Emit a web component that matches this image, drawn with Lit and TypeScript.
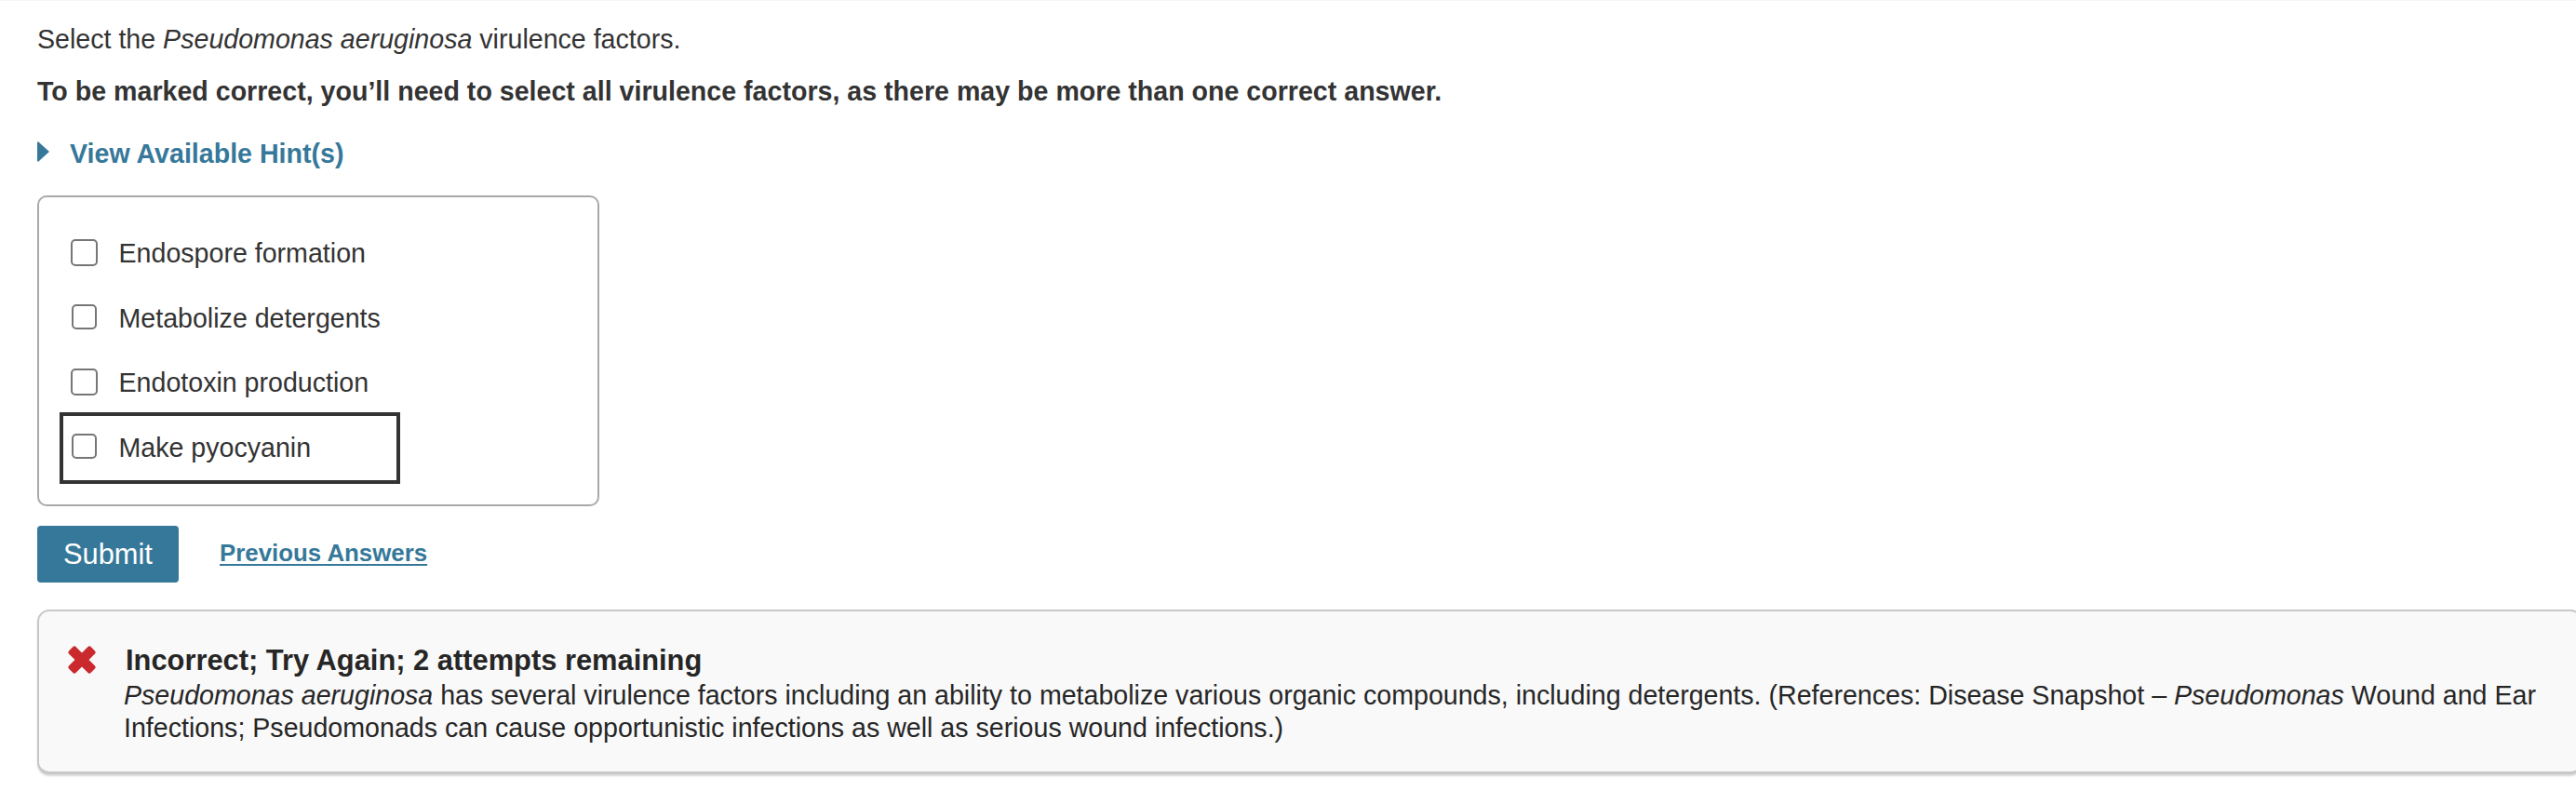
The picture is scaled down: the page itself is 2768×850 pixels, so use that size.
import { LitElement, html, css } from 'lit';
import { customElement, property } from 'lit/decorators.js';
import { classMap } from 'lit/directives/class-map.js';

@customElement('answer-list')
export class AnswerList extends LitElement {
    @property({ type: Array }) options: string[] = [];
    @property({ type: Number }) active = -1;

    static styles = css`
        :host {
            display: block;
            box-sizing: border-box;
            width: 604px;
            height: 334px;
            padding: 26px;
            border: 2px solid #a9a9a9;
            border-radius: 10px;
        }

        .option {
            display: flex;
            align-items: flex-start;
            box-sizing: border-box;
            width: 358px;
            height: 69.5px;
            padding: 16px 0 0 8px;
            line-height: 36px;
        }

        .active {
            outline: 4px solid #333;
        }

        .box {
            appearance: none;
            box-sizing: border-box;
            flex: none;
            width: 29px;
            height: 29px;
            margin: 3px 22.5px 0 0;
            border: 2px solid #767676;
            border-radius: 5px;
            background: #fff;
        }

        .option:nth-of-type(even) .box {
            width: 27px;
            height: 27px;
            margin: 3px 23.5px 0 1px;
        }
    `;

    render() {
        return html`
            ${this.options.map((text, i) => html`
                <label class=${classMap({ option: true, active: i === this.active })}>
                    <input class="box" type="checkbox">
                    <span>${text}</span>
                </label>
            `)}
        `;
    }
}

@customElement('answer-feedback')
export class AnswerFeedback extends LitElement {
    static styles = css`
        :host {
            display: flex;
            box-sizing: border-box;
            width: 2735px;
            height: 177px;
            padding: 35px 31px 0;
            border: 2px solid #c8c8c8;
            border-bottom-width: 3px;
            border-radius: 13px;
            background: #f9f9f9;
            box-shadow: 0 2px 2px rgba(0, 0, 0, 0.16);
            color: #262626;
            white-space: nowrap;
        }

        .cross {
            display: block;
            flex: none;
            width: 30px;
            height: 30px;
            margin: 2px 30px 0 0;
            fill: #ca2a2d;
        }

        .title {
            margin: 0 0 2px 2px;
            font-size: 30.85px;
            line-height: 36px;
            font-weight: bold;
        }

        .text {
            margin: 0;
            line-height: 35px;
        }
    `;

    render() {
        return html`
            <svg class="cross" viewBox="0 0 30 30">
                <g transform="rotate(45 15 15)">
                    <rect x="-1.7" y="9.7" width="33.4" height="10.6" rx="2.5"></rect>
                    <rect x="9.7" y="-1.7" width="10.6" height="33.4" rx="2.5"></rect>
                </g>
            </svg>
            <div>
                <h3 class="title">Incorrect; Try Again; 2 attempts remaining</h3>
                <p class="text"><em>Pseudomonas aeruginosa</em> has several virulence factors including an ability to metabolize various organic compounds, including detergents. (References: Disease Snapshot – <em>Pseudomonas</em> Wound and Ear<br>Infections; Pseudomonads can cause opportunistic infections as well as serious wound infections.)</p>
            </div>
        `;
    }
}

@customElement('app-root')
export class AppRoot extends LitElement {
    options = [
        'Endospore formation',
        'Metabolize detergents',
        'Endotoxin production',
        'Make pyocyanin',
    ];

    static styles = css`
        :host {
            display: block;
            box-sizing: border-box;
            height: 850px;
            padding: 23px 0 0 40px;
            overflow: hidden;
            border-top: 1px solid #f7f7f7;
            background: #fff;
            color: #333;
            font-family: "Liberation Sans", Helvetica, Arial, sans-serif;
            font-size: 28.6px;
            line-height: 36px;
        }

        .question {
            margin: 0 0 20px;
        }

        .note {
            margin: 0 0 31px;
            font-weight: bold;
        }

        .hint {
            display: flex;
            align-items: flex-start;
            gap: 22px;
            margin-bottom: 27px;
            color: #36789a;
            font-weight: bold;
        }

        .arrow {
            display: block;
            width: 13px;
            height: 22px;
            margin-top: 5px;
            fill: #36789a;
        }

        .actions {
            display: flex;
            gap: 44px;
            margin: 21px 0 29px;
        }

        .submit {
            width: 152px;
            height: 61px;
            padding: 0;
            border: 0;
            border-radius: 4px;
            background: #36789a;
            color: #fff;
            font-family: inherit;
            font-size: 30.8px;
        }

        .previous {
            padding-top: 11px;
            color: #36789a;
            font-size: 25.85px;
            font-weight: bold;
            text-decoration: underline;
            text-decoration-thickness: 2px;
            text-underline-offset: 3px;
            text-decoration-skip-ink: none;
        }
    `;

    render() {
        return html`
            <p class="question">Select the <em>Pseudomonas aeruginosa</em> virulence factors.</p>
            <p class="note">To be marked correct, you’ll need to select all virulence factors, as there may be more than one correct answer.</p>
            <div class="hint">
                <svg class="arrow" viewBox="0 0 13 22"><path d="M0 1Q1 -1 3 2L13 11L3 20Q1 23 0 21Z"></path></svg>
                <span>View Available Hint(s)</span>
            </div>
            <answer-list .options=${this.options} .active=${3}></answer-list>
            <div class="actions">
                <button class="submit">Submit</button>
                <a class="previous">Previous Answers</a>
            </div>
            <answer-feedback></answer-feedback>
        `;
    }
}
